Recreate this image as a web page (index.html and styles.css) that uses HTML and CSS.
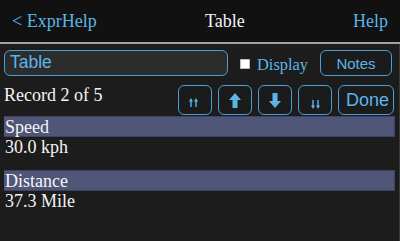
FILE: index.html
```html
<!DOCTYPE html>
<html>
<head>
<meta charset="utf-8">
<link rel="stylesheet" href="styles.css">
</head>
<body>
<header class="topbar">
  <span class="nav-link">&lt; ExprHelp</span>
  <span class="title">Table</span>
  <span class="nav-link">Help</span>
</header>
<main class="content">
  <div class="row-form">
    <div class="field">Table</div>
    <span class="check"></span>
    <span class="check-label">Display</span>
    <button class="btn notes">Notes</button>
  </div>
  <div class="row-nav">
    <span class="record">Record 2 of 5</span>
    <div class="nav-buttons">
      <button class="btn icon-btn dbl-up">
        <svg width="9" height="9" viewBox="0 0 9 9"><polygon points="0,3.6 2,0 4,3.6" fill="#5bb5e8"/><rect x="1.3" y="3" width="1.4" height="6" fill="#5bb5e8"/><polygon points="5,3.6 7,0 9,3.6" fill="#5bb5e8"/><rect x="6.3" y="3" width="1.4" height="6" fill="#5bb5e8"/></svg>
      </button>
      <button class="btn icon-btn">
        <svg width="12" height="15" viewBox="0 0 12 15"><polygon points="6,0 12,7 8.5,7 8.5,15 3.5,15 3.5,7 0,7" fill="#5bb5e8"/></svg>
      </button>
      <button class="btn icon-btn">
        <svg width="12" height="15" viewBox="0 0 12 15"><polygon points="6,15 12,8 8.5,8 8.5,0 3.5,0 3.5,8 0,8" fill="#5bb5e8"/></svg>
      </button>
      <button class="btn icon-btn dbl-down">
        <svg width="9" height="9" viewBox="0 0 9 9"><polygon points="0,5.4 2,9 4,5.4" fill="#5bb5e8"/><rect x="1.3" y="0" width="1.4" height="6" fill="#5bb5e8"/><polygon points="5,5.4 7,9 9,5.4" fill="#5bb5e8"/><rect x="6.3" y="0" width="1.4" height="6" fill="#5bb5e8"/></svg>
      </button>
      <button class="btn done">Done</button>
    </div>
  </div>
  <div class="records">
    <div class="rec-label">Speed</div>
    <div class="rec-value">30.0 kph</div>
    <div class="rec-label">Distance</div>
    <div class="rec-value">37.3 Mile</div>
  </div>
</main>
</body>
</html>
```
FILE: styles.css
```css
html, body {
  margin: 0;
  padding: 0;
}
body {
  background: #1c1c1c;
  font-family: "Liberation Serif", "Times New Roman", serif;
  color: #f4f4f4;
  width: 400px;
  height: 241px;
  overflow: hidden;
}
.topbar {
  display: flex;
  justify-content: space-between;
  align-items: center;
  height: 42px;
  padding: 0 12px;
  background: #111111;
  border-bottom: 2px solid #a3a3a3;
  font-size: 18px;
}
.nav-link {
  color: #5bb5e8;
}
.title {
  color: #f4f4f4;
}
.content {
  padding: 6px 4px 0 4px;
  border-right: 1px solid #3a3a3a;
  height: 197px;
  box-sizing: border-box;
}
.row-form {
  display: flex;
  align-items: center;
  height: 26px;
}
.field {
  box-sizing: border-box;
  width: 224px;
  height: 26px;
  border: 1.5px solid #4a9fd4;
  border-radius: 6px;
  background: #2c2c2c;
  color: #5bb5e8;
  font-family: "Liberation Sans", Arial, sans-serif;
  font-size: 17.5px;
  line-height: 23px;
  padding-left: 5px;
}
.check {
  width: 10px;
  height: 10px;
  margin-left: 12px;
  margin-top: 2px;
  background: #ffffff;
  border-radius: 1.5px;
  box-shadow: inset 0 0 0 1px #bdbdbd;
}
.check-label {
  margin-left: 7px;
  padding-top: 3px;
  font-size: 16.4px;
  color: #5bb5e8;
}
.btn {
  box-sizing: border-box;
  border: 1.6px solid #4a9fd4;
  border-radius: 6px;
  background: #1b1b1b;
  color: #5bb5e8;
  font-family: "Liberation Sans", Arial, sans-serif;
  padding: 0;
  display: flex;
  align-items: center;
  justify-content: center;
}
.notes {
  margin-left: auto;
  margin-right: 3px;
  width: 72px;
  height: 26px;
  font-size: 15px;
}
.row-nav {
  display: flex;
  align-items: flex-start;
  height: 30px;
  margin-top: 9px;
}
.record {
  font-size: 18px;
  line-height: 21px;
}
.nav-buttons {
  display: flex;
  gap: 6px;
  margin-left: auto;
  margin-right: 1px;
}
.icon-btn {
  width: 34px;
  height: 30px;
}
.dbl-up svg {
  margin-top: 4px;
  margin-left: -3px;
}
.dbl-down svg {
  margin-top: 8px;
}
.done {
  width: 56px;
  height: 30px;
  font-size: 18px;
  padding-left: 3px;
}
.records {
  margin-top: 1px;
}
.rec-label {
  box-sizing: border-box;
  height: 21px;
  line-height: 20px;
  font-size: 18px;
  background: #4f5677;
  border: 1px solid #3e4260;
  border-left: none;
  padding-left: 1px;
  color: #f6f6f6;
}
.rec-value {
  font-size: 18px;
  line-height: 21px;
  padding-left: 1px;
  margin-bottom: 12px;
}
```
